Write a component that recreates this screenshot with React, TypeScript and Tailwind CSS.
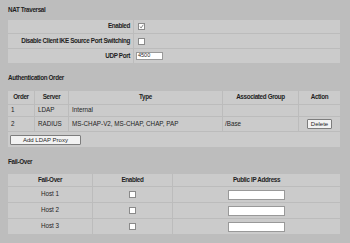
import React from 'react';

const Check: React.FC<{ checked?: boolean }> = ({ checked }) => (
    <span className="inline-flex items-center justify-center w-[7px] h-[7px] bg-white border border-[#8a8a8a]">
        {checked && (
            <svg viewBox="0 0 7 7" className="w-[5px] h-[5px]">
                <path d="M1 3.5 L3 5.5 L6 1" stroke="#555" strokeWidth="1" fill="none" />
            </svg>
        )}
    </span>
);

const Cell: React.FC<{ className?: string; children?: React.ReactNode }> = ({ className = '', children }) => (
    <div className={`bg-[#cbcbcb] flex items-center whitespace-nowrap ${className}`}>{children}</div>
);

// bold labels in the page are a narrow face; squeeze Liberation Sans a bit
const lbl = 'font-bold text-[6.3px] tracking-[-0.35px]';

const App: React.FC = () => {
    return (
        <div className="w-[350px] h-[243px] bg-[#bdbdbd] text-[#1e1e1e] text-[6.3px] leading-none overflow-hidden" style={{ fontFamily: '"Liberation Sans", Arial, sans-serif' }}>
            <div className="pl-[8px] pr-[10px]">
                <div className={`h-[20px] flex items-center ${lbl}`}>NAT Traversal</div>

                <div className="grid grid-cols-[125px_1fr] gap-px bg-[#bcbcbc]">
                    <Cell className={`h-[13px] justify-end pr-[3px] ${lbl}`}>Enabled</Cell>
                    <Cell className="h-[13px] pl-[4px]"><Check checked /></Cell>
                    <Cell className={`h-[14px] justify-end pr-[3px] ${lbl}`}>Disable Client IKE Source Port Switching</Cell>
                    <Cell className="h-[14px] pl-[4px]"><Check /></Cell>
                    <Cell className={`h-[14px] justify-end pr-[3px] ${lbl}`}>UDP Port</Cell>
                    <Cell className="h-[14px] pl-[2px]">
                        <div className="w-[27px] h-[8px] bg-white border border-[#999] flex items-center pl-[1px] text-[5.5px]">4500</div>
                    </Cell>
                </div>

                <div className={`h-[28px] flex items-center pt-[2px] ${lbl}`}>Authentication Order</div>

                <div className="grid grid-cols-[26px_33px_153px_75px_1fr] gap-px bg-[#bcbcbc]">
                    <Cell className={`h-[13px] justify-center ${lbl}`}>Order</Cell>
                    <Cell className={`justify-center ${lbl}`}>Server</Cell>
                    <Cell className={`justify-center ${lbl}`}>Type</Cell>
                    <Cell className={`justify-center ${lbl}`}>Associated Group</Cell>
                    <Cell className={`justify-center ${lbl}`}>Action</Cell>

                    <Cell className="h-[11px] pl-[3px]">1</Cell>
                    <Cell className="pl-[3px]">LDAP</Cell>
                    <Cell className="pl-[3px]">Internal</Cell>
                    <Cell />
                    <Cell />

                    <Cell className="h-[14px] pl-[3px]">2</Cell>
                    <Cell className="pl-[3px]">RADIUS</Cell>
                    <Cell className="pl-[3px]">MS-CHAP-V2, MS-CHAP, CHAP, PAP</Cell>
                    <Cell className="pl-[2px]">/Base</Cell>
                    <Cell className="justify-center">
                        <button className="h-[10px] px-[3px] bg-[#f2f2f2] border border-[#7d7d7d] rounded-[1px] text-[6px] leading-none">Delete</button>
                    </Cell>

                    <Cell className="col-span-5 h-[15px] pl-[2px]">
                        <button className="w-[71px] h-[10px] bg-[#f2f2f2] border border-[#7d7d7d] rounded-[1px] text-[6px] leading-none">Add LDAP Proxy</button>
                    </Cell>
                </div>

                <div className={`h-[27px] flex items-center pt-[3px] ${lbl}`}>Fail-Over</div>

                <div className="grid grid-cols-[84px_79px_1fr] gap-px bg-[#bcbcbc]">
                    <Cell className={`h-[12px] justify-center ${lbl}`}>Fail-Over</Cell>
                    <Cell className={`justify-center ${lbl}`}>Enabled</Cell>
                    <Cell className={`justify-center ${lbl}`}>Public IP Address</Cell>
                    {['Host 1', 'Host 2', 'Host 3'].map((h) => (
                        <React.Fragment key={h}>
                            <Cell className="h-[15px] justify-center">{h}</Cell>
                            <Cell className="justify-center"><Check /></Cell>
                            <Cell className="justify-center">
                                <div className="w-[57px] h-[10px] bg-white border border-[#999]" />
                            </Cell>
                        </React.Fragment>
                    ))}
                </div>
            </div>
        </div>
    );
};

export default App;
